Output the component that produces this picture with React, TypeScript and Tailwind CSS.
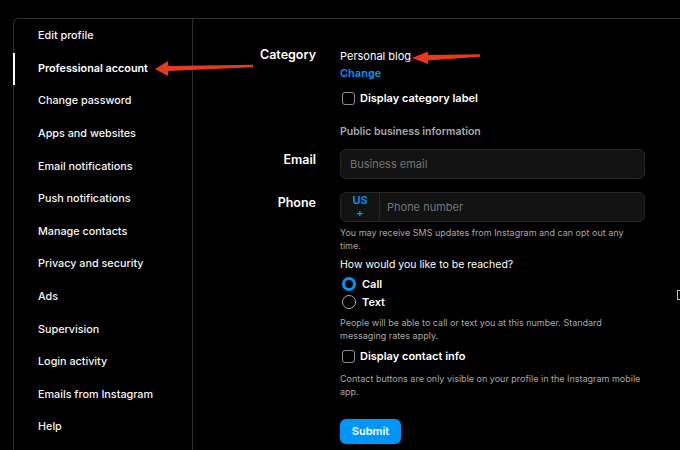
import React from 'react';

const navItems = [
  'Edit profile',
  'Professional account',
  'Change password',
  'Apps and websites',
  'Email notifications',
  'Push notifications',
  'Manage contacts',
  'Privacy and security',
  'Ads',
  'Supervision',
  'Login activity',
  'Emails from Instagram',
  'Help',
];

function Checkbox() {
  return <span className="block w-[13px] h-[13px] ml-[2px] rounded-[3px] border-[1.5px] border-[#8e8e8e]" />;
}

function Radio({ checked }: { checked?: boolean }) {
  return checked ? (
    <span className="block w-[14px] h-[14px] ml-[2px] rounded-full border-[3.5px] border-[#0095f6] bg-black" />
  ) : (
    <span className="block w-[14px] h-[14px] ml-[2px] rounded-full border-[1.5px] border-[#a8a8a8]" />
  );
}

function Arrows() {
  return (
    <svg className="absolute inset-0 pointer-events-none" width="680" height="450" viewBox="0 0 680 450">
      {/* sidebar arrow */}
      <polygon points="253,64.8 168,66 168,61 155,69 168,76 168,71 253,67.2" fill="#e8381f" />
      {/* category arrow */}
      <polygon points="480,54.3 428,55 428,51.5 412,58 428,64 428,60.5 480,56.7" fill="#e8381f" />
    </svg>
  );
}

export default function App() {
  return (
    <div
      className="relative w-[680px] h-[450px] overflow-hidden bg-black text-white pt-[18px] pl-[13px]"
      style={{ fontFamily: 'Inter, "Noto Sans", sans-serif' }}
    >
      <div className="flex h-[440px] border-t border-l border-[#2f2f2f] rounded-tl-[5px]">
        {/* Sidebar */}
        <nav className="w-[179px] shrink-0 border-r border-[#2f2f2f] flex flex-col pt-[1px]">
          {navItems.map((item) => {
            const active = item === 'Professional account';
            return (
              <div
                key={item}
                className={
                  'h-[32.6px] -ml-px flex items-center pl-[23px] border-l-2 text-[10.8px] ' +
                  (active ? 'border-white font-semibold text-white' : 'border-transparent font-medium text-[#f5f5f5]')
                }
              >
                {item}
              </div>
            );
          })}
        </nav>

        {/* Form */}
        <div className="flex-1 pt-[28px]">
          <div className="flex">
            <div className="w-[123px] text-right text-[12.5px] font-semibold leading-[16px]">Category</div>
            <div className="ml-[24px] w-[305px] pt-[2px]">
              <div className="text-[11px] leading-[14px]">Personal blog</div>
              <div className="mt-[3px] text-[11px] leading-[14px] font-semibold text-[#0095f6]">Change</div>
              <div className="mt-[10px] h-[16px] flex items-center gap-[5px]">
                <Checkbox />
                <span className="text-[11px] font-semibold">Display category label</span>
              </div>
              <div className="mt-[19px] text-[10.5px] leading-[14px] font-semibold text-[#a8a8a8]">
                Public business information
              </div>
            </div>
          </div>

          <div className="flex mt-[10px]">
            <div className="w-[123px] text-right text-[12.5px] font-semibold leading-[16px] pt-[3px]">Email</div>
            <div className="ml-[24px] w-[305px] h-[30px] flex items-center px-[9px] rounded-[6px] bg-[#121212] border border-[#262626] text-[11px] text-[#737373]">
              Business email
            </div>
          </div>

          <div className="flex mt-[13px]">
            <div className="w-[123px] text-right text-[12.5px] font-semibold leading-[16px] pt-[3px]">Phone</div>
            <div className="ml-[24px] w-[305px]">
              <div className="h-[30px] flex rounded-[6px] bg-[#121212] border border-[#262626]">
                <div className="w-[39px] flex flex-col items-center justify-center border-r border-[#262626] text-[#0095f6] font-semibold">
                  <span className="text-[11px] leading-[13px]">US</span>
                  <span className="text-[11px] leading-[13px]">+</span>
                </div>
                <div className="flex items-center pl-[7px] text-[11px] text-[#737373]">Phone number</div>
              </div>
              <p className="mt-[4px] whitespace-nowrap text-[9px] leading-[13px] text-[#a8a8a8]">
                You may receive SMS updates from Instagram and can opt out any
                <br />
                time.
              </p>
              <div className="mt-[6px] text-[10.5px] leading-[14px]">How would you like to be reached?</div>
              <div className="mt-[4px] h-[16px] flex items-center gap-[6px]">
                <Radio checked />
                <span className="text-[11px] font-semibold">Call</span>
              </div>
              <div className="mt-[2px] h-[16px] flex items-center gap-[6px]">
                <Radio />
                <span className="text-[11px] font-semibold">Text</span>
              </div>
              <p className="mt-[6px] whitespace-nowrap text-[9px] leading-[13px] text-[#a8a8a8]">
                People will be able to call or text you at this number. Standard
                <br />
                messaging rates apply.
              </p>
              <div className="mt-[6px] h-[16px] flex items-center gap-[5px]">
                <Checkbox />
                <span className="text-[11px] font-semibold">Display contact info</span>
              </div>
              <p className="mt-[9px] whitespace-nowrap text-[9px] leading-[12.5px] text-[#a8a8a8]">
                Contact buttons are only visible on your profile in the Instagram mobile
                <br />
                app.
              </p>
              <button className="mt-[21px] w-[61px] h-[25px] rounded-[6px] bg-[#0095f6] text-[11px] font-semibold text-white">
                Submit
              </button>
            </div>
          </div>
        </div>
      </div>

      {/* stray cursor mark at right edge */}
      <div className="absolute left-[677px] top-[290px] w-[3px] h-[10px] border border-r-0 border-[#bbbbbb]" />
      <Arrows />
    </div>
  );
}
